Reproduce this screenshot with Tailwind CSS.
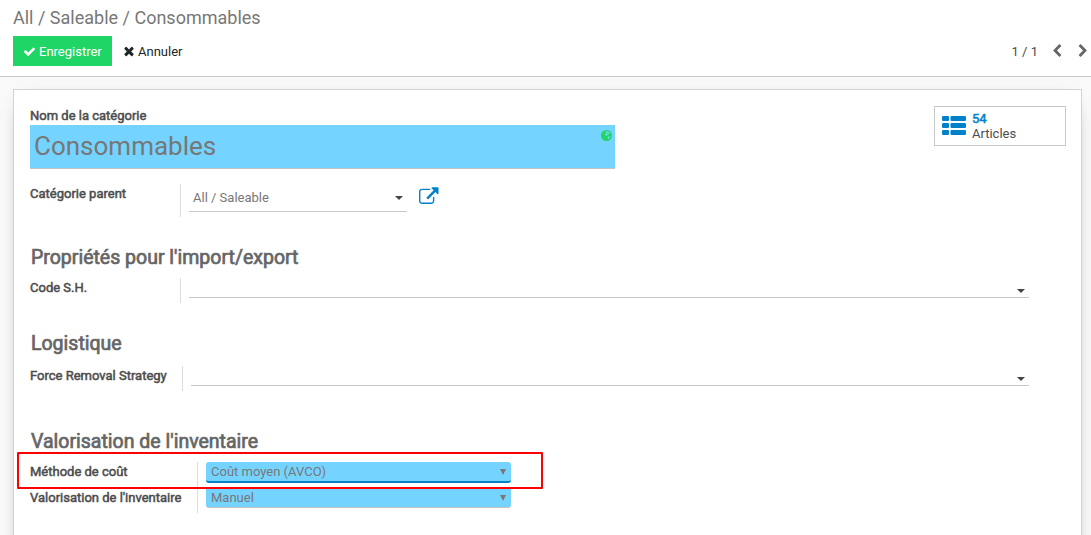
<!DOCTYPE html>
<html lang="fr">
<head>
<meta charset="utf-8">
<title>Catégorie d'articles</title>
<script src="https://cdn.jsdelivr.net/npm/@tailwindcss/browser@4"></script>
</head>
<body class="flex h-[535px] flex-col overflow-hidden bg-[#f9f9f9] font-[Roboto,sans-serif] text-[13px] leading-5 text-[#4c4c4c]">
<header class="h-[77px] shrink-0 border-b border-[#cacaca] bg-white pl-[13px]">
  <div class="flex h-9 items-center text-[18px] text-[#777]">All / Saleable / Consommables</div>
  <div class="flex h-[30px] items-center">
    <button class="flex h-[30px] w-[99px] items-center bg-[#1fd566] pl-[10px] text-white">
      <svg class="mr-[3px] h-[13px] w-[13px]" viewBox="0 0 1792 1792" fill="currentColor"><path d="M1671 566q0 40-28 68l-724 724-136 136q-28 28-68 28t-68-28l-136-136-362-362q-28-28-28-68t28-68l136-136q28-28 68-28t68 28l294 295 656-657q28-28 68-28t68 28l136 136q28 28 28 68z"/></svg><span class="pt-0.5">Enregistrer</span></button>
    <button class="ml-[10px] flex items-center text-[#212529]">
      <svg class="mr-[2px] h-[14px] w-[14px]" viewBox="0 0 1792 1792" fill="currentColor"><path d="M1490 1322q0 40-28 68l-136 136q-28 28-68 28t-68-28l-294-294-294 294q-28 28-68 28t-68-28l-136-136q-28-28-28-68t28-68l294-294-294-294q-28-28-28-68t28-68l136-136q28-28 68-28t68 28l294 294 294-294q28-28 68-28t68 28l136 136q28 28 28 68t-28 68l-294 294 294 294q28 28 28 68z"/></svg><span class="pt-0.5">Annuler</span></button>
    <div class="ml-auto flex items-center">
      <span class="pt-0.5">1 / 1</span>
      <svg class="ml-[12px] h-[14px] w-[14px] text-[#666]" viewBox="0 0 1792 1792" fill="currentColor"><path d="M1427 301l-531 531 531 531q19 19 19 45t-19 45l-166 166q-19 19-45 19t-45-19l-742-742q-19-19-19-45t19-45l742-742q19-19 45-19t45 19l166 166q19 19 19 45t-19 45z"/></svg>
      <svg class="mr-px ml-[12px] h-[14px] w-[14px] text-[#666]" viewBox="0 0 1792 1792" fill="currentColor"><path d="M1363 877l-742 742q-19 19-45 19t-45-19l-166-166q-19-19-19-45t19-45l531-531-531-531q-19-19-19-45t19-45l166-166q19-19 45-19t45 19l742 742q19 19 19 45t-19 45z"/></svg>
    </div>
  </div>
</header>
<main class="mt-3 ml-[13px] h-[500px] w-[1069px] shrink-0 border border-[#d3d3d3] bg-white pr-[15px] pl-4 shadow-[0_5px_20px_-15px_#000]">
  <div class="flex h-[94px] justify-between pt-[15px]">
    <div class="w-[585px]">
      <div class="h-5 pt-px [-webkit-text-stroke:0.5px]">Nom de la catégorie</div>
      <div class="flex h-11 justify-between border-b border-[#c4c4c4] bg-[#75d4ff] pl-1 text-[26px] leading-[42px] text-[#777]">
        <span>Consommables</span>
        <svg class="mt-[5px] mr-[3px] h-[11px] w-[11px]" viewBox="0 0 22 22"><circle cx="11" cy="11" r="11" fill="#1fd566"/><path d="M9 3l4-1 5 3-1 3-3 1-2 3-4-1-1-3 3-1zM14 13l3-1 2 1-2 4-3 2-1-3z" fill="#75d4ff" opacity=".75"/></svg>
      </div>
    </div>
    <button class="mt-px flex h-10 w-[132px] border border-[#c9c9c9] text-left leading-[15px]">
      <svg class="mt-[9px] ml-[7px] h-[19px] w-6 shrink-0" viewBox="0 0 24 19" fill="#0081c9"><rect width="7" height="5" rx="1.2"/><rect x="8.5" width="15.5" height="5" rx="1.2"/><rect y="7" width="7" height="5" rx="1.2"/><rect x="8.5" y="7" width="15.5" height="5" rx="1.2"/><rect y="14" width="7" height="5" rx="1.2"/><rect x="8.5" y="14" width="15.5" height="5" rx="1.2"/></svg>
      <span class="mt-[4px] ml-[6px]"><span class="block text-[#0081c9] [-webkit-text-stroke:0.5px]">54</span><span class="block">Articles</span></span>
    </button>
  </div>
  <div class="flex h-[59px]">
    <div class="w-[150px] [-webkit-text-stroke:0.5px]">Catégorie parent</div>
    <div class="flex h-[33px] border-l border-[#ddd] pl-2">
      <div class="flex h-7 w-[218px] items-center justify-between border-b border-[#c8c8c8] pr-1 pl-1 text-[#777]">All / Saleable
        <svg class="h-1 w-2" viewBox="0 0 8 4"><path d="M0 0h8L4 4z" fill="#444"/></svg></div>
      <svg class="mt-[3px] ml-[12px] h-[20px] w-[19.5px]" viewBox="0 0 1792 1792" fill="#0081c9"><path d="M1408 928v320q0 119-84.500 203.500t-203.500 84.500h-832q-119 0-203.500-84.500t-84.500-203.500v-832q0-119 84.500-203.500t203.500-84.500h704q14 0 23 9t9 23v64q0 14-9 23t-23 9h-704q-66 0-113 47t-47 113v832q0 66 47 113t113 47h832q66 0 113-47t47-113v-320q0-14 9-23t23-9h64q14 0 23 9t9 23zm384-864v512q0 26-19 45t-45 19-45-19l-176-176-652 652q-10 10-23 10t-23-10l-114-114q-10-10-10-23t10-23l652-652-176-176q-19-19-19-45t19-45 45-19h512q26 0 45 19t19 45z"/></svg>
    </div>
  </div>
  <h2 class="h-[35px] pt-1 pl-px text-[19.5px] leading-[22px] text-[#666] [-webkit-text-stroke:0.7px]">Propriétés pour l'import/export</h2>
  <div class="flex h-[51px]">
    <div class="w-[150px] [-webkit-text-stroke:0.5px]">Code S.H.</div>
    <div class="h-[25px] border-l border-[#ddd] pl-2">
      <div class="flex h-5 w-[840px] items-center justify-end border-b border-[#c8c8c8] pt-[7px] pr-1"><svg class="h-1 w-2" viewBox="0 0 8 4"><path d="M0 0h8L4 4z" fill="#444"/></svg></div>
    </div>
  </div>
  <h2 class="h-[37px] pt-1 pl-px text-[19.5px] leading-[22px] text-[#666] [-webkit-text-stroke:0.7px]">Logistique</h2>
  <div class="flex h-[61px]">
    <div class="w-[152px] [-webkit-text-stroke:0.5px]">Force Removal Strategy</div>
    <div class="h-[25px] border-l border-[#ddd] pl-2">
      <div class="flex h-5 w-[838px] items-center justify-end border-b border-[#c8c8c8] pt-[7px] pr-1"><svg class="h-1 w-2" viewBox="0 0 8 4"><path d="M0 0h8L4 4z" fill="#444"/></svg></div>
    </div>
  </div>
  <h2 class="h-[35px] pt-1 pl-px text-[19.5px] leading-[22px] text-[#666] [-webkit-text-stroke:0.7px]">Valorisation de l'inventaire</h2>
  <div class="flex h-[51px]">
    <div class="w-[167px] [-webkit-text-stroke:0.5px]"><div class="h-[26px]">Méthode de coût</div><div>Valorisation de l'inventaire</div></div>
    <div class="flex flex-col gap-1 border-l border-[#ddd] pl-2 text-[#777]">
      <div class="flex h-[21px] w-[305px] items-center justify-between rounded-[3px] border-b-2 border-[#0081c9] bg-[#75d4ff] pr-[5px] pl-[5px]">Coût moyen (AVCO)<svg class="h-[6px] w-[6px]" viewBox="0 0 6 6"><path d="M0 0h6L3 6z" fill="#777"/></svg></div>
      <div class="flex h-[21px] w-[305px] items-center justify-between rounded-[3px] border-b border-[#c4c4c4] bg-[#75d4ff] pt-0.5 pr-[5px] pl-[5px]">Manuel<svg class="h-[6px] w-[6px]" viewBox="0 0 6 6"><path d="M0 0h6L3 6z" fill="#777"/></svg></div>
    </div>
  </div>
</main>
<div class="absolute top-[452px] left-[17px] h-[37px] w-[526px] rounded-[1px] border-2 border-[#f00]"></div>
</body>
</html>
